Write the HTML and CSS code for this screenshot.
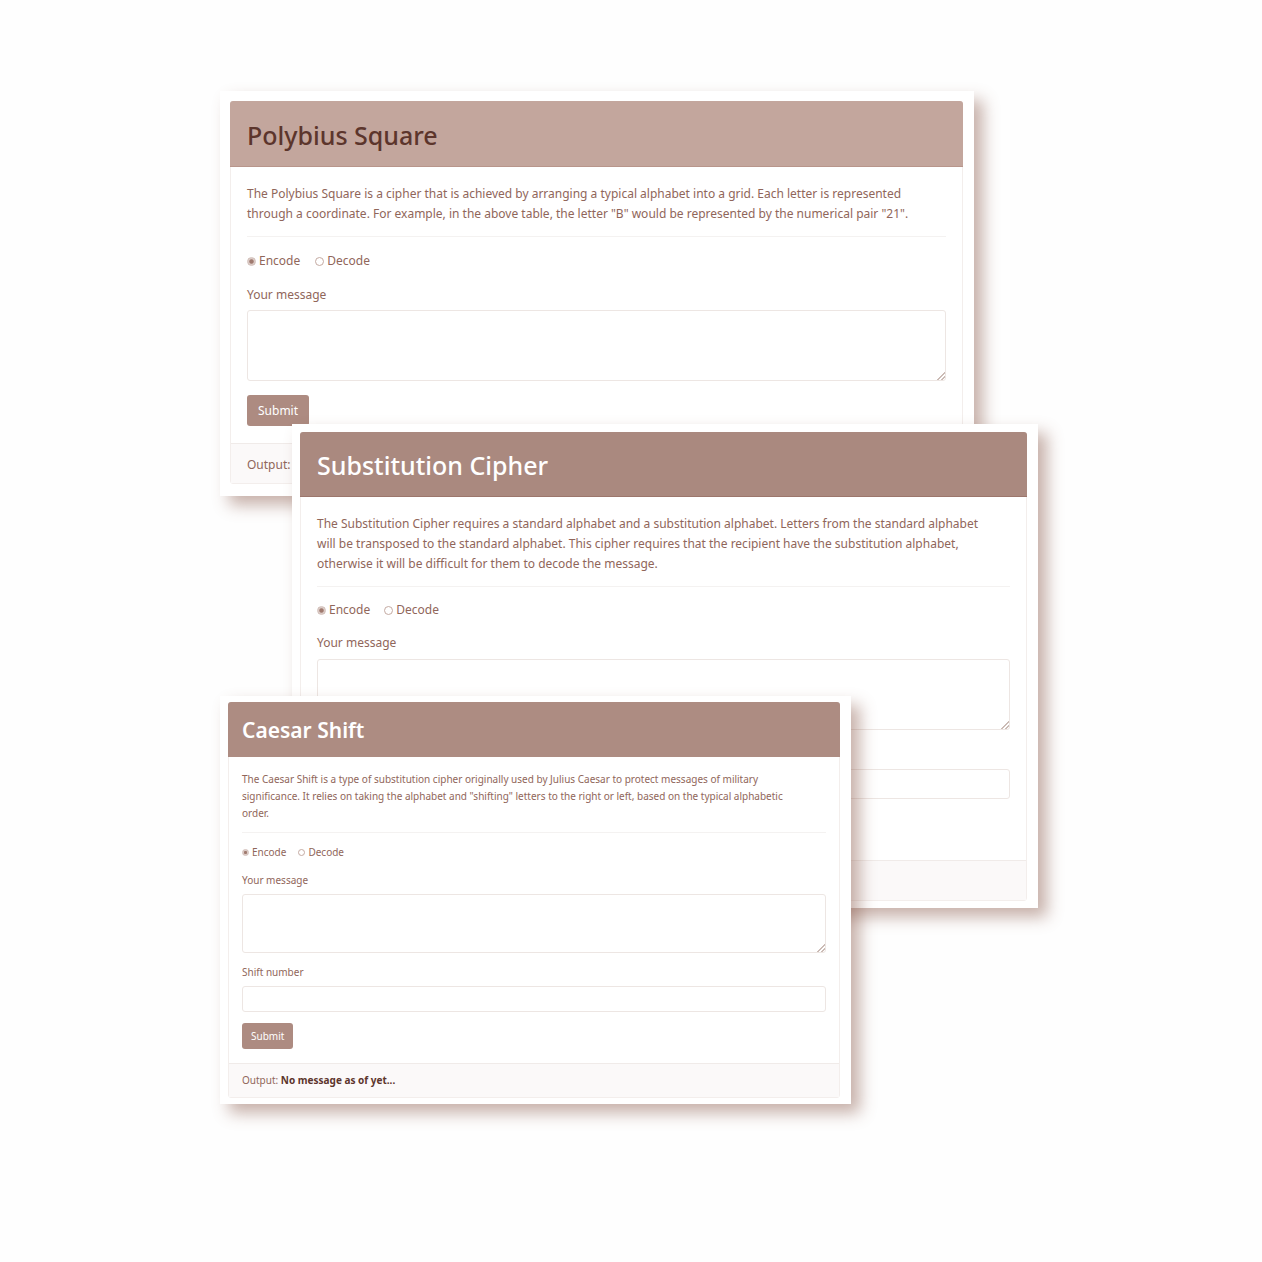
FILE: index.html
```html
<!DOCTYPE html>
<html lang="en">
<head>
<meta charset="utf-8">
<meta name="viewport" content="width=device-width, initial-scale=1">
<title>Ciphers</title>
<link rel="stylesheet" href="styles.css">
</head>
<body>
<main class="stage">
  <section class="sheet sheet-polybius">
    <form class="card">
      <h2 class="card-header">Polybius Square</h2>
      <div class="card-body">
        <p class="intro">The Polybius Square is a cipher that is achieved by arranging a typical alphabet into a grid. Each letter is represented through a coordinate. For example, in the above table, the letter "B" would be represented by the numerical pair "21".</p>
        <hr class="rule">
        <div class="modes">
          <label class="mode"><input class="radio" type="radio" name="polybius-mode" checked>Encode</label>
          <label class="mode"><input class="radio" type="radio" name="polybius-mode">Decode</label>
        </div>
        <div class="field">
          <label for="polybius-message">Your message</label>
          <textarea class="control message" id="polybius-message"></textarea>
        </div>
        <button class="submit" type="button">Submit</button>
      </div>
      <div class="card-footer">Output:</div>
    </form>
  </section>

  <section class="sheet sheet-substitution">
    <form class="card">
      <h2 class="card-header">Substitution Cipher</h2>
      <div class="card-body">
        <p class="intro">The Substitution Cipher requires a standard alphabet and a substitution alphabet. Letters from the standard alphabet will be transposed to the standard alphabet. This cipher requires that the recipient have the substitution alphabet, otherwise it will be difficult for them to decode the message.</p>
        <hr class="rule">
        <div class="modes">
          <label class="mode"><input class="radio" type="radio" name="substitution-mode" checked>Encode</label>
          <label class="mode"><input class="radio" type="radio" name="substitution-mode">Decode</label>
        </div>
        <div class="field">
          <label for="substitution-message">Your message</label>
          <textarea class="control message" id="substitution-message"></textarea>
        </div>
        <div class="field">
          <label for="substitution-alphabet">Alphabet</label>
          <input class="control" type="text" id="substitution-alphabet">
        </div>
        <button class="submit" type="button">Submit</button>
      </div>
      <div class="card-footer"></div>
    </form>
  </section>

  <section class="sheet sheet-caesar">
    <form class="card">
      <h2 class="card-header">Caesar Shift</h2>
      <div class="card-body">
        <p class="intro">The Caesar Shift is a type of substitution cipher originally used by Julius Caesar to protect messages of military significance. It relies on taking the alphabet and "shifting" letters to the right or left, based on the typical alphabetic order.</p>
        <hr class="rule">
        <div class="modes">
          <label class="mode"><input class="radio" type="radio" name="caesar-mode" checked>Encode</label>
          <label class="mode"><input class="radio" type="radio" name="caesar-mode">Decode</label>
        </div>
        <div class="field">
          <label for="caesar-message">Your message</label>
          <textarea class="control message" id="caesar-message"></textarea>
        </div>
        <div class="field">
          <label for="caesar-shift">Shift number</label>
          <input class="control" type="text" id="caesar-shift">
        </div>
        <button class="submit" type="button">Submit</button>
      </div>
      <div class="card-footer">Output: <strong>No message as of yet...</strong></div>
    </form>
  </section>
</main>
</body>
</html>
```
FILE: styles.css
```css
* { box-sizing: border-box; }

body {
  margin: 0;
  background: #fefefe;
  color: #90665a;
  font-family: "Noto Sans", "Open Sans", sans-serif;
}

.stage {
  display: flex;
  flex-direction: column;
  padding: 91px 224px 158px 220px;
}

/* Each sheet overlaps the one before it */
.sheet {
  --text: 12px;
  --title: 25px;
  --title-weight: 500;
  --line: 20px;
  --inset: 16px;
  --gap: 14px;
  --field-gap: 5px;
  --rule-gap: 12px;
  --head: 66px;
  --control: 30px;
  --message: 71px;
  --button: 31px;
  --button-pad: 11px;
  --foot: 40px;
  --radio: 9px;
  --band: #aa897f;
  --band-edge: #9c766c;
  --title-color: #fff;
  position: relative;
  background: #fff;
  box-shadow: 9px 9px 15px rgba(132, 84, 68, 0.45);
}

.sheet-polybius {
  --band: #c3a69d;
  --band-edge: #b8958b;
  --title-color: #5c352c;
  margin-right: 64px;
  padding: 10px 11px 12px 10px;
}

.sheet-substitution {
  --gap: 13px;
  --field-gap: 6px;
  --head: 65px;
  margin: -72px 0 0 72px;
  padding: 8px 11px 7px 8px;
}

.sheet-caesar {
  --text: 10px;
  --title: 21px;
  --title-weight: 600;
  --line: 17px;
  --inset: 13px;
  --gap: 11px;
  --rule-gap: 10px;
  --head: 55px;
  --control: 26px;
  --message: 59px;
  --button: 26px;
  --button-pad: 9px;
  --foot: 34px;
  --radio: 7px;
  --band: #ad8c82;
  --band-edge: #ad8c82;
  margin: -212px 187px 0 0;
  padding: 6px 11px 6px 8px;
}

.card {
  border: 1px solid #f3eeec;
  border-radius: 3px;
  font-size: var(--text);
  line-height: var(--line);
}

.card-header {
  display: flex;
  align-items: center;
  height: var(--head);
  margin: -1px -1px 0;
  padding: 2px calc(var(--inset) + 1px) 0;
  border-bottom: 1px solid var(--band-edge);
  border-radius: 3px 3px 0 0;
  background: var(--band);
  color: var(--title-color);
  font-size: var(--title);
  font-weight: var(--title-weight);
}

.card-body {
  display: flex;
  flex-direction: column;
  align-items: stretch;
  gap: var(--gap);
  padding: calc(var(--inset) + 1px) var(--inset);
}

.intro {
  margin: 0;
  padding-right: 16px;
}

.rule {
  width: 100%;
  height: 1px;
  margin: calc(var(--rule-gap) - var(--gap)) 0 0;
  border: 0;
  background: #f4f2f1;
}

.modes {
  display: flex;
  gap: calc(var(--gap) + 1px);
}

.mode {
  display: flex;
  align-items: center;
  gap: 3px;
}

.radio {
  appearance: none;
  width: var(--radio);
  height: var(--radio);
  margin: 0;
  border: 1px solid #c4aaa2;
  border-radius: 50%;
  background: #fff;
}

.radio:checked {
  border-color: #d3c0ba;
  background: radial-gradient(circle, #a07a6f 0 35%, #dccdc8 55%);
}

.field {
  display: flex;
  flex-direction: column;
  gap: var(--field-gap);
}

.control {
  width: 100%;
  height: var(--control);
  padding: 4px 8px;
  border: 1px solid #ede6e3;
  border-radius: 3px;
  background: #fff;
  color: inherit;
  font: inherit;
}

.message {
  height: var(--message);
  resize: vertical;
}

.message::-webkit-resizer {
  background: linear-gradient(135deg, transparent 50%, #cbbbb5 50% 58%, transparent 58% 74%, #cbbbb5 74% 82%, transparent 82%) right bottom / 8px 8px no-repeat;
}

.submit {
  align-self: flex-start;
  height: var(--button);
  padding: 0 var(--button-pad);
  border: 0;
  border-radius: 3px;
  background: #ad8b81;
  color: #fff;
  font: inherit;
}

.card-footer {
  height: var(--foot);
  padding: calc(var(--gap) - 3px) var(--inset);
  border-top: 1px solid #f0ebe9;
  background: #fbf9f9;
}

.card-footer strong {
  color: #5c352c;
  font-weight: 700;
}
```
